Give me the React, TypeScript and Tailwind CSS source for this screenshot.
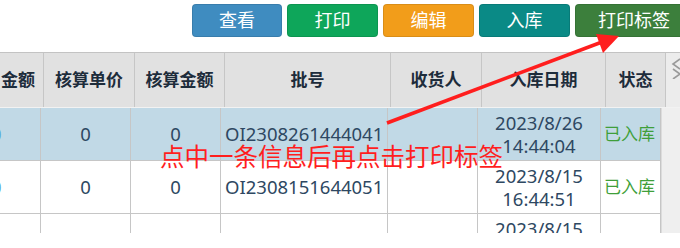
const buttons = [
  { label: "查看", w: "w-[90px]", bg: "bg-[#3f8cc0]" },
  { label: "打印", w: "w-[91px]", bg: "bg-[#0ea65a]" },
  { label: "编辑", w: "w-[91px]", bg: "bg-[#f29d1a]" },
  { label: "入库", w: "w-[91px]", bg: "bg-[#0a8a86]" },
  { label: "打印标签", w: "w-[118px]", bg: "bg-[#3c7f3c]" },
];

const headCols = [
  { label: "金额", w: "w-[44px]", align: "justify-end pr-[8px]" },
  { label: "核算单价", w: "w-[91px]", align: "justify-center" },
  { label: "核算金额", w: "w-[90px]", align: "justify-center" },
  { label: "批号", w: "w-[166px]", align: "justify-center" },
  { label: "收货人", w: "w-[91px]", align: "justify-center" },
  { label: "入库日期", w: "w-[124px]", align: "justify-center" },
  { label: "状态", w: "w-[60px]", align: "justify-center" },
];

const rows = [
  { batch: "OI2308261444041", date: "2023/8/26", time: "14:44:04", status: "已入库", selected: true },
  { batch: "OI2308151644051", date: "2023/8/15", time: "16:44:51", status: "已入库", selected: false },
  { batch: "", date: "2023/8/15", time: "", status: "", selected: false },
];

const cell = "h-full flex items-center border-r border-[#c6c6c6] shrink-0";

const App = () => {
  return (
    <div className="relative w-[680px] h-[248px] overflow-hidden bg-white font-['Noto_Sans','Noto_Sans_CJK_SC',sans-serif]">
      <div className="flex h-[52px] pt-[4px] pl-[192px] gap-[5px]">
        {buttons.map((b) => (
          <div
            key={b.label}
            className={`${b.w} ${b.bg} h-[33px] shrink-0 rounded-[4px] flex items-center justify-center text-white text-[18px] border border-black/10`}
          >
            {b.label}
          </div>
        ))}
      </div>

      <div className="flex h-[56px] bg-[#e1e1e1] border-t border-[#c3c3c3] border-b border-b-[#f2f2f2] text-[17px] font-bold text-[#1d2c3b]">
        {headCols.map((c) => (
          <div key={c.label} className={`${cell} ${c.w} ${c.align}`}>
            {c.label}
          </div>
        ))}
        <div className="flex-1 h-full bg-[#ececec] flex items-start pl-[4px] pt-[4px]">
          <svg width="12" height="22" viewBox="0 0 12 22">
            <path d="M10 2 L3 7 L10 12" fill="none" stroke="#9a9a9a" strokeWidth="1.6" />
            <path d="M3 12 L10 17 L3 22" fill="none" stroke="#9a9a9a" strokeWidth="1.6" />
          </svg>
        </div>
      </div>

      <div className="flex h-[125px] overflow-hidden">
        <div className="w-[661px] shrink-0 text-[18.5px] text-[#2e4862]">
          {rows.map((r, i) => (
            <div
              key={i}
              className={`flex h-[53px] border-b border-[#c6c6c6] ${r.selected ? "bg-[#c1d9e6]" : "bg-white"}`}
            >
              <div className={`${cell} w-[41px] overflow-hidden`}>
                {r.batch && <span className="-ml-[9px] text-[#5aa8dc]">0</span>}
              </div>
              <div className={`${cell} w-[90px] justify-center`}>{r.batch && "0"}</div>
              <div className={`${cell} w-[90px] justify-center`}>{r.batch && "0"}</div>
              <div className={`${cell} w-[167px] pl-[4px]`}>{r.batch}</div>
              <div className={`${cell} w-[90px]`} />
              <div className={`${cell} w-[123px] justify-center text-center leading-[23px]`}>
                <div>
                  <div>{r.date}</div>
                  <div>{r.time || "\u00a0"}</div>
                </div>
              </div>
              <div className={`${cell} w-[60px] pl-[3px] text-[17px] text-[#3f9f3a]`}>{r.status}</div>
            </div>
          ))}
        </div>
        <div className="flex-1 bg-[#efefef] border-l border-[#dcdcdc]" />
      </div>

      <svg className="absolute left-0 top-0" width="680" height="248" viewBox="0 0 680 248">
        <line x1="387" y1="123" x2="602" y2="42" stroke="#ff1e1e" strokeWidth="3.5" />
        <polygon points="619,36 596,34 603,53" fill="#ff1e1e" />
      </svg>

      <div className="absolute left-[160px] top-[141px] text-[24.5px] leading-[30px] text-[#ff1e1e] whitespace-nowrap font-['Noto_Sans_CJK_SC',sans-serif]">
        点中一条信息后再点击打印标签
      </div>
    </div>
  );
};

export default App;
